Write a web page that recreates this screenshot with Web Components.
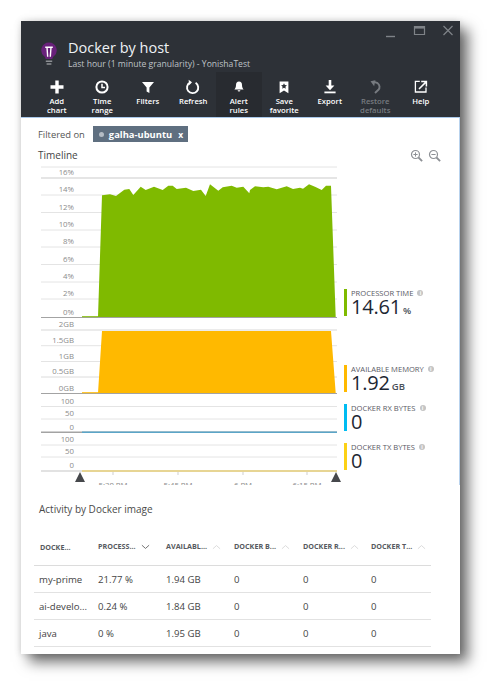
<!DOCTYPE html>
<html>
<head>
<meta charset="utf-8">
<title>Docker by host</title>
<style>
  html, body { margin: 0; padding: 0; background: #fff; }
  body { font-family: "Open Sans", "Liberation Sans", sans-serif; color: #444; width: 502px; height: 696px; overflow: hidden; }
</style>
</head>
<body>
<x-blade>
  <x-blade-header slot="header" title-text="Docker by host" sub-text="Last hour (1 minute granularity) - YonishaTest">
    <x-tool-button icon="plus">Add chart</x-tool-button>
    <x-tool-button icon="clock">Time range</x-tool-button>
    <x-tool-button icon="funnel">Filters</x-tool-button>
    <x-tool-button icon="refresh">Refresh</x-tool-button>
    <x-tool-button icon="bell" active>Alert rules</x-tool-button>
    <x-tool-button icon="bookmark">Save favorite</x-tool-button>
    <x-tool-button icon="export">Export</x-tool-button>
    <x-tool-button icon="undo" disabled>Restore defaults</x-tool-button>
    <x-tool-button icon="help">Help</x-tool-button>
  </x-blade-header>

  <x-timeline slot="timeline">
    <x-filter-chip slot="filter">galha-ubuntu</x-filter-chip>

    <x-chart-row height="152" color="#7fba00"
      lines="1,12,29,46.5,64,81,98.5,116,133" labels=",16%,14%,12%,10%,8%,6%,4%,2%,0%" base="151.7"
      area="82,151 98,151 102,29.3 110,28.3 116,30 124.3,23.7 129.3,23 133.3,29 140.7,20.7 145.7,24 154,20.7 162.7,24 168.3,19.7 172.7,19.7 176.7,23 186,21.7 193.3,25 201,23.7 205.7,30 210,18.3 218.3,24.7 222.7,21.3 231.7,19.7 236.7,21.7 243.3,20.7 249.3,27.3 250,24 255,20.3 263.3,21.3 268.3,20.7 276.7,23.3 286.7,20.3 293,23 300,21.7 303,22.7 309,18.3 315,20.7 321.7,24 326,19.7 331,19.7 335.7,151">
      <x-metric color="#7fba00" value="14.61" unit="%">PROCESSOR TIME</x-metric>
    </x-chart-row>

    <x-chart-row height="76" color="#ffb900"
      lines="12,27.7,43.5,59" labels="2GB,1.5GB,1GB,0.5GB,0GB" base="75.7"
      area="82,75 98,75 102,13 331,13 335.7,75">
      <x-metric color="#ffb900" value="1.92" unit="GB">AVAILABLE MEMORY</x-metric>
    </x-chart-row>

    <x-chart-row height="39" trace="#5aa5c8"
      lines="12.5,25" labels="100,50,0" base="38.2">
      <x-metric color="#00bcf2" value="0">DOCKER RX BYTES</x-metric>
    </x-chart-row>

    <x-chart-row height="39" trace="#e8d07a" light
      lines="12,24" labels="100,50,0" base="38">
      <x-metric color="#fcd116" value="0">DOCKER TX BYTES</x-metric>
    </x-chart-row>

    <x-time-axis slot="axis"></x-time-axis>
  </x-timeline>

  <x-activity-grid slot="grid" heading="Activity by Docker image"></x-activity-grid>
</x-blade>

<script>
const ICONS = {
  plus: '<path d="M10 3.5v13M3.5 10h13" stroke="currentColor" stroke-width="3.4" fill="none"/>',
  clock: '<circle cx="10" cy="10" r="5.6" stroke="currentColor" stroke-width="2" fill="none"/><path d="M10 6.8V10.4H13" stroke="currentColor" stroke-width="1.5" fill="none"/>',
  funnel: '<path d="M4 5h12l-4.6 5.4V16l-2.8-1.4v-4.2z" fill="currentColor"/>',
  refresh: '<path d="M12.6 5.8A5.6 5.6 0 1 1 7 5.6" stroke="currentColor" stroke-width="1.9" fill="none"/><path d="M5.6 2.8L9 5.2 6.2 8.2z" fill="currentColor"/>',
  bell: '<path d="M10 4.6c-2 0-3 1.5-3 3.4 0 2.4-.8 3.4-1.6 4.4h9.2c-.8-1-1.6-2-1.6-4.4 0-1.9-1-3.4-3-3.4z" fill="currentColor"/><path d="M8.6 13.2h2.8a1.4 1.4 0 0 1-2.8 0z" fill="currentColor"/>',
  bookmark: '<path fill-rule="evenodd" d="M5.6 4.6h8.8v11.6L10 13.6l-4.4 2.6zM10 6.2l-.9 1.9-2 .2 1.5 1.4-.4 2L10 10.8l1.8.9-.4-2 1.5-1.4-2-.2z" fill="currentColor"/>',
  export: '<path d="M10 3v8" stroke="currentColor" stroke-width="2.6" fill="none"/><path d="M5.6 8.4h8.8L10 13.2z" fill="currentColor"/><path d="M4.4 15.4h11.2" stroke="currentColor" stroke-width="1.8" fill="none"/>',
  undo: '<path d="M8.4 4.6l4.2 1.6a4.4 4.4 0 0 1 .8 6.6L10 16" stroke="currentColor" stroke-width="1.9" fill="none"/><path d="M5.2 4.8l4.6-2v6.2z" fill="currentColor" transform="rotate(12 8 6)"/>',
  help: '<path d="M9.4 5H5v10.6h10.6V11" stroke="currentColor" stroke-width="1.3" fill="none" transform="translate(-.6 -.6)"/><path d="M8 12l6.6-6.6M10.2 4.4h5.2v5.2" stroke="currentColor" stroke-width="1.5" fill="none"/>'
};

class XBlade extends HTMLElement {
  constructor() {
    super();
    this.attachShadow({ mode: 'open' }).innerHTML = `
      <style>
        :host {
          display: flex;
          flex-direction: column;
          position: absolute;
          left: 21px;
          top: 21px;
          width: 439px;
          height: 633px;
          background: #fff;
          box-shadow: 8px 8px 13px rgba(0,0,0,.58), 0 0 7px rgba(0,0,0,.14);
        }
      </style>
      <slot name="header"></slot>
      <slot name="timeline"></slot>
      <slot name="grid"></slot>
    `;
  }
}

class XBladeHeader extends HTMLElement {
  constructor() {
    super();
    this.attachShadow({ mode: 'open' });
  }
  connectedCallback() {
    this.shadowRoot.innerHTML = `
      <style>
        :host {
          display: block;
          background: #2d3137;
          border-bottom: 1px solid #a9c8ea;
          color: #fff;
        }
        .top { display: flex; height: 51px; padding-left: 19px; }
        .bulb { margin-top: 20px; width: 18px; height: 26px; }
        .titles { margin-left: 10px; padding-top: 18px; }
        .title { font-size: 14.5px; line-height: 18px; color: #eef2f5; }
        .sub { font-size: 8.6px; line-height: 12px; color: #bfc3c7; margin-top: 1px; }
        .win { margin-left: auto; display: flex; align-self: flex-start; gap: 14px; padding: 3px 5px 0 0; color: #7f8388; }
        .win svg { display: block; width: 14px; height: 14px; }
        .tools { display: flex; padding-left: 13px; height: 45px; }
      </style>
      <div class="top">
        <svg class="bulb" viewBox="0 0 18 26">
          <path d="M9 1.5a7.8 7.8 0 0 1 4.6 14c-.9.8-1.1 1.6-1.2 2.5H5.6c-.1-.9-.3-1.7-1.2-2.5A7.8 7.8 0 0 1 9 1.5z" fill="#68217a"/>
          <path d="M5.2 6.2h7.6M7 6.2l.7 9.6M11 6.2l-.7 9.6" stroke="#fff" stroke-width="1.4" fill="none"/>
          <path d="M5.8 20.2h6.4M6.6 23h4.8" stroke="#8d9094" stroke-width="1.4"/>
        </svg>
        <div class="titles">
          <div class="title">${this.getAttribute('title-text')}</div>
          <div class="sub">${this.getAttribute('sub-text')}</div>
        </div>
        <div class="win">
          <svg viewBox="0 0 14 14"><path d="M1 12.5h9" stroke="currentColor" stroke-width="1.4"/></svg>
          <svg viewBox="0 0 14 14"><path d="M1.5 2.5h10v8h-10z" stroke="currentColor" stroke-width="1.2" fill="none"/><path d="M1.5 3.5h10" stroke="currentColor" stroke-width="2.2"/></svg>
          <svg viewBox="0 0 14 14"><path d="M2.5 2l9 9M11.5 2l-9 9" stroke="currentColor" stroke-width="1.2"/></svg>
        </div>
      </div>
      <div class="tools"><slot></slot></div>
    `;
  }
}

class XToolButton extends HTMLElement {
  constructor() {
    super();
    this.attachShadow({ mode: 'open' });
  }
  connectedCallback() {
    this.shadowRoot.innerHTML = `
      <style>
        :host {
          display: flex;
          flex-direction: column;
          align-items: center;
          width: 45.5px;
          height: 45px;
          padding-top: 5px;
          box-sizing: border-box;
          color: #fff;
          font-size: 7.7px;
          line-height: 9px;
          font-weight: 600;
          text-align: center;
        }
        :host([active]) { background: #282b30; }
        :host([disabled]) { color: #777b80; }
        svg { display: block; width: 20px; height: 20px; flex: none; }
        .label { padding: 0 6px; }
      </style>
      <svg viewBox="0 0 20 20">${ICONS[this.getAttribute('icon')]}</svg>
      <div class="label"><slot></slot></div>
    `;
  }
}

class XFilterChip extends HTMLElement {
  constructor() {
    super();
    this.attachShadow({ mode: 'open' }).innerHTML = `
      <style>
        :host {
          display: inline-flex;
          align-items: center;
          height: 16px;
          padding: 0 5px 0 6px;
          background: #5f6f80;
          color: #fff;
          font-size: 9.4px;
          font-weight: 700;
        }
        i { width: 5px; height: 5px; border-radius: 50%; background: #b4bcc5; margin-right: 5px; }
        b { margin-left: 6px; font-weight: 700; font-size: 8.5px; }
      </style>
      <i></i><slot></slot><b>x</b>
    `;
  }
}

class XTimeline extends HTMLElement {
  constructor() {
    super();
    this.attachShadow({ mode: 'open' }).innerHTML = `
      <style>
        :host {
          display: block;
          height: 367px;
          border-right: 1px solid #b9d3ee;
          box-sizing: border-box;
          padding-top: 8px;
          overflow: hidden;
        }
        .filter { display: flex; align-items: center; gap: 8px; height: 16px; padding-left: 17px; font-size: 9.4px; color: #555; }
        .head { display: flex; height: 19px; margin-top: 5px; padding-left: 17px; font-size: 10px; line-height: 16px; color: #444; }
        .zoom { margin-left: auto; display: flex; gap: 5px; padding: 2px 18px 0 0; color: #8d9095; }
        .zoom svg { display: block; width: 13px; height: 13px; }
        .rows { padding-left: 20px; }
      </style>
      <div class="filter"><span>Filtered on</span><slot name="filter"></slot></div>
      <div class="head">
        <span>Timeline</span>
        <div class="zoom">
          <svg viewBox="0 0 13 13"><circle cx="5.5" cy="5.5" r="4" stroke="currentColor" stroke-width="1.2" fill="none"/><path d="M8.5 8.5l3.6 3.6" stroke="currentColor" stroke-width="1.8"/><path d="M3.4 5.5h4.2M5.5 3.4v4.2" stroke="currentColor"/></svg>
          <svg viewBox="0 0 13 13"><circle cx="5.5" cy="5.5" r="4" stroke="currentColor" stroke-width="1.2" fill="none"/><path d="M8.5 8.5l3.6 3.6" stroke="currentColor" stroke-width="1.8"/><path d="M3.4 5.5h4.2" stroke="currentColor"/></svg>
        </div>
      </div>
      <div class="rows"><slot></slot><slot name="axis"></slot></div>
    `;
  }
}

// one strip of the stacked chart + its legend on the right
class XChartRow extends HTMLElement {
  constructor() {
    super();
    this.attachShadow({ mode: 'open' });
  }
  connectedCallback() {
    const h = +this.getAttribute('height');
    const base = +this.getAttribute('base');
    const lines = this.getAttribute('lines').split(',').map(Number);
    const labels = this.getAttribute('labels').split(',');
    const area = this.getAttribute('area');
    const trace = this.getAttribute('trace');
    const baseColor = this.hasAttribute('light') ? '#d8d8d8' : '#a3a3a3';

    const grid = lines.map((y, i) =>
      `<line x1="41" x2="337" y1="${y}" y2="${y}" stroke="${(h > 50 && i === lines.length - 9 + (h > 100 ? 1 : 8)) ? '#dcdcdc' : '#e4e4e4'}" stroke-width="${(h > 50 && i === (h > 100 ? 1 : 0)) ? 1.6 : 1}"/>`).join('');

    // labels sit just above their line, the last one above the base line
    const all = lines.concat(base);
    const text = labels.map((t, i) => {
      const y = all[labels.length === lines.length + 1 ? i : i + (lines.length + 1 - labels.length)] - 2.6;
      return t ? `<text x="74" y="${y}" text-anchor="end">${t}</text>` : '';
    }).join('');

    this.shadowRoot.innerHTML = `
      <style>
        :host { display: flex; height: ${h}px; }
        svg { display: block; flex: none; width: 300px; height: ${h}px; }
        text { font-size: 7.8px; fill: #8b8b8b; }
        .side { flex: 1; display: flex; align-items: flex-end; padding: 0 0 2px 3px; }
      </style>
      <svg viewBox="41 0 300 ${h}">
        ${grid}
        ${text}
        ${area ? `<polygon points="${area}" fill="${this.getAttribute('color')}"/>` : ''}
        <line x1="41" x2="337" y1="${base}" y2="${base}" stroke="${baseColor}" stroke-width="1.4"/>
        ${area ? `<line x1="82" x2="98" y1="${base - 1}" y2="${base - 1}" stroke="${this.getAttribute('color')}"/>` : ''}
        ${trace ? `<line x1="82" x2="337" y1="${base}" y2="${base}" stroke="${trace}" stroke-width="1.4"/>` : ''}
      </svg>
      <div class="side"><slot></slot></div>
    `;
  }
}

class XMetric extends HTMLElement {
  constructor() {
    super();
    this.attachShadow({ mode: 'open' });
  }
  connectedCallback() {
    const unit = this.getAttribute('unit');
    this.shadowRoot.innerHTML = `
      <style>
        :host { display: flex; height: 27px; border-left: 3.6px solid ${this.getAttribute('color')}; padding-left: 4px; }
        .label { display: flex; align-items: center; height: 9px; margin-top: 0; font-size: 7.6px; line-height: 9px; color: #5a5a66; white-space: nowrap; }
        .info { width: 6px; height: 6px; border-radius: 50%; background: #c4c4c4; color: #fff; margin-left: 4px; margin-top: -2px; font-size: 5px; line-height: 6px; text-align: center; font-weight: 700; }
        .value { font-size: 20px; line-height: 18px; color: #1d2733; white-space: nowrap; letter-spacing: -.2px; }
        .unit { font-size: 9.5px; font-weight: 600; color: #4a5058; margin-left: 2px; letter-spacing: 0; }
      </style>
      <div>
        <div class="label"><slot></slot><span class="info">i</span></div>
        <div class="value">${this.getAttribute('value')}${unit ? `<span class="unit">${unit}</span>` : ''}</div>
      </div>
    `;
  }
}

class XTimeAxis extends HTMLElement {
  constructor() {
    super();
    const ticks = [[113, '5:30 PM'], [178, '5:45 PM'], [243, '6 PM'], [307, '6:15 PM']];
    this.attachShadow({ mode: 'open' }).innerHTML = `
      <style>
        :host { display: block; height: 13px; }
        svg { display: block; width: 300px; height: 13px; }
        text { font-size: 7.8px; fill: #8b8b8b; }
      </style>
      <svg viewBox="41 0 300 13">
        ${ticks.map(([x, t]) => `<line x1="${x}" x2="${x}" y1="0" y2="3" stroke="#cfcfcf"/><text x="${x}" y="16" text-anchor="middle">${t}</text>`).join('')}
        <path d="M80 0l5 10H75zM336 0l5 10h-10z" fill="#46484c"/>
      </svg>
    `;
  }
}

class XActivityGrid extends HTMLElement {
  constructor() {
    super();
    this.attachShadow({ mode: 'open' });
  }
  connectedCallback() {
    const cols = [
      ['DOCKE...', ''], ['PROCESS...', 'down'], ['AVAILABL...', 'up'],
      ['DOCKER B...', 'up'], ['DOCKER R...', 'up'], ['DOCKER T...', 'up']
    ];
    const rows = [
      ['my-prime', '21.77 %', '1.94 GB', '0', '0', '0'],
      ['ai-develo...', '0.24 %', '1.84 GB', '0', '0', '0'],
      ['java', '0 %', '1.95 GB', '0', '0', '0']
    ];
    const caret = d => !d ? '' : d === 'down'
      ? '<svg viewBox="0 0 10 6"><path d="M1 1l4 3.6L9 1" stroke="#666" fill="none"/></svg>'
      : '<svg viewBox="0 0 10 6"><path d="M1 5l4-3.6L9 5" stroke="#d8d8d8" fill="none"/></svg>';
    this.shadowRoot.innerHTML = `
      <style>
        :host { display: block; padding: 17px 29px 0 13px; }
        h3 { margin: 0 0 0 5px; font-size: 10px; line-height: 14px; font-weight: 400; color: #4a4a4a; }
        table { border-collapse: collapse; table-layout: fixed; width: 397px; margin-top: 15px; }
        th { height: 31px; padding: 0 0 3px 6px; font-size: 7.2px; font-weight: 700; color: #565a60; text-align: left; white-space: nowrap; border-bottom: 1.4px solid #dcdcdc; }
        td { height: 26px; padding: 0 0 0 6px; font-size: 9.6px; color: #444; white-space: nowrap; border-bottom: 1.4px solid #e2e2e2; }
        tr td:first-child { padding-left: 5px; }
        th svg { display: inline-block; width: 9px; height: 6px; margin: 0 0 2px 5px; vertical-align: middle; }
      </style>
      <h3>${this.getAttribute('heading')}</h3>
      <table>
        <colgroup><col style="width:58px"><col style="width:68px"><col style="width:68px"><col style="width:69px"><col style="width:68px"><col style="width:66px"></colgroup>
        <tr>${cols.map(c => `<th>${c[0]}${caret(c[1])}</th>`).join('')}</tr>
        ${rows.map(r => `<tr>${r.map(v => `<td>${v}</td>`).join('')}</tr>`).join('')}
      </table>
    `;
  }
}

customElements.define('x-blade', XBlade);
customElements.define('x-blade-header', XBladeHeader);
customElements.define('x-tool-button', XToolButton);
customElements.define('x-filter-chip', XFilterChip);
customElements.define('x-timeline', XTimeline);
customElements.define('x-chart-row', XChartRow);
customElements.define('x-metric', XMetric);
customElements.define('x-time-axis', XTimeAxis);
customElements.define('x-activity-grid', XActivityGrid);
</script>
</body>
</html>
